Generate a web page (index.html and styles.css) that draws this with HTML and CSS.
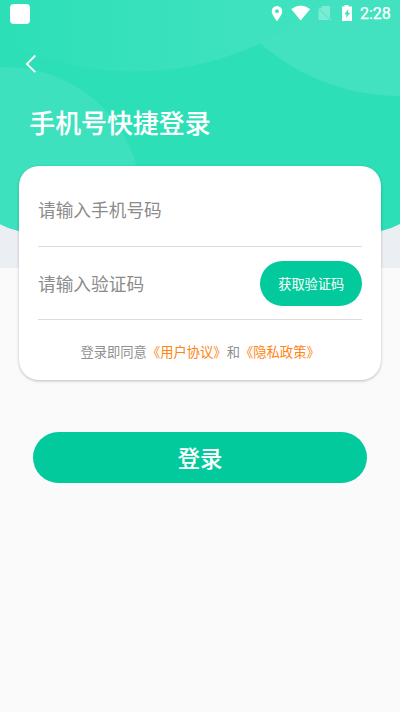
FILE: index.html
```
<!DOCTYPE html>
<html lang="zh-CN">
<head>
<meta charset="utf-8">
<title>手机号快捷登录</title>
<link rel="stylesheet" href="styles.css">
</head>
<body>
<div class="screen">
  <svg class="backdrop" viewBox="0 0 400 268" aria-hidden="true">
    <defs>
      <clipPath id="wave"><path d="M0 0H400V224Q391 229 381 231Q200 290 19 231Q9 229 0 224Z"/></clipPath>
      <linearGradient id="glow" gradientUnits="userSpaceOnUse" x1="0" x2="240" y1="0" y2="0"><stop offset="0" stop-color="#2cdfb7"/><stop offset="1" stop-color="#3ee2be"/></linearGradient>
    </defs>
    <rect width="400" height="268" fill="#ebeef2"/>
    <g clip-path="url(#wave)">
      <rect width="400" height="268" fill="#2cdfb7"/>
      <circle cx="400" cy="-116" r="212" fill="#42e2c0"/>
      <circle cx="133" cy="-231.500" r="303" fill="url(#glow)"/>
      <circle cx="6" cy="202.500" r="135.600" fill="#3de1bd"/>
    </g>
  </svg>
  <header class="status">
    <span class="app-dot"></span>
    <svg class="status-icons" width="86" height="20" viewBox="0 0 86 20" fill="#fff" aria-hidden="true">
      <path fill-rule="evenodd" d="M7 2a5.300 5.300 0 0 0-5.300 5.300c0 3.700 5.300 9.900 5.300 9.900s5.300-6.200 5.300-9.900a5.300 5.300 0 0 0-5.300-5.300zm0 3.300a1.900 1.900 0 1 1 0 3.800 1.900 1.900 0 0 1 0-3.800z"/>
      <path d="M21.200 5Q31-2 40.200 5L30.700 16.500Z"/>
      <path fill-opacity=".3" d="M60 2V14.500L50 4.500L52.500 2ZM48.500 5V16H59.500Z"/>
      <path stroke="#fff" stroke-opacity=".35" d="M48.500 3.500L61 16.500"/>
      <path fill-rule="evenodd" d="M72 2.500h2.500V1h4v1.500H82V17H72zM78.300 5l-4 5.200h2V14l3.800-5.200h-2z"/>
    </svg>
    <span class="clock">2:28</span>
  </header>
  <nav class="nav">
    <svg width="12" height="20" viewBox="0 0 12 20" fill="none" stroke="#fff" stroke-width="1.800"><path d="M10.300 1.500L1.800 10L10.300 18.200"/></svg>
  </nav>
  <h1 class="title">手机号快捷登录</h1>
  <main class="card">
    <div class="field">请输入手机号码</div>
    <div class="field code-field"><span>请输入验证码</span><button class="code">获取验证码</button></div>
    <p class="terms">登录即同意<a>《用户协议》</a>和<a>《隐私政策》</a></p>
  </main>
  <button class="login">登录</button>
</div>
</body>
</html>
```
FILE: styles.css
```
* { box-sizing: border-box; }
body { margin: 0; font-family: "Noto Sans CJK SC", sans-serif; }
button { border: 0; padding: 0; font-family: inherit; color: #fff; background: #02ca9c; }
.screen { position: relative; width: 400px; height: 712px; overflow: hidden; background: #fafafa; isolation: isolate; }
.backdrop { position: absolute; inset: 0 auto auto 0; width: 400px; height: 268px; z-index: -1; }
.status { display: flex; align-items: center; height: 28px; padding: 0 8px 0 10px; }
.app-dot { width: 20px; height: 20px; border-radius: 4px; background: #fff; margin-right: auto; }
.status-icons { margin-right: 4px; }
.clock { width: 32px; font: 400 16px/20px Roboto, sans-serif; color: #fff; white-space: nowrap; -webkit-text-stroke: .25px #fff; }
.nav { height: 70px; padding: 26px 0 0 25px; }
.nav svg { display: block; }
.title { margin: 0 0 0 29.300px; height: 68px; font-size: 25.900px; line-height: 48px; font-weight: 500; color: #fff; -webkit-text-stroke: .1px #fff; }
.card { width: 361.500px; height: 214px; margin-left: 19.200px; padding: 8px 18.500px 0 18.800px; border-radius: 20px; background: #fff; box-shadow: 0 1px 3px rgba(0,0,0,.25); }
.field { display: flex; align-items: center; height: 73px; padding-bottom: 2px; border-bottom: 1.500px solid #dcdcdc; font-size: 17.700px; color: #8b8b8b; }
.code-field { justify-content: space-between; padding-bottom: 0; }
.code { width: 102px; height: 45px; border-radius: 23px; font-size: 13.200px; }
.terms { margin: 0; height: 66px; line-height: 64px; font-size: 13.300px; color: #909090; text-align: center; white-space: nowrap; }
.terms a { color: #ff8412; }
.login { display: block; width: 334px; height: 51px; margin: 52px 0 0 33px; padding-bottom: 2px; border-radius: 26px; font-size: 22.300px; font-weight: 500; -webkit-text-stroke: .1px #fff; }
```
